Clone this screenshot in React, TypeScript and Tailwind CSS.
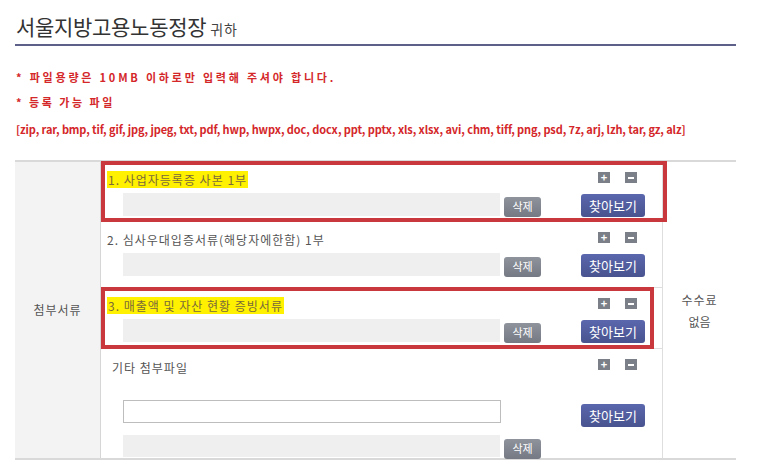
import React from 'react';

const kr = { fontFamily: '"Noto Sans CJK KR", "Noto Sans", sans-serif' };

const PlusMinus = () => (
  <div className="flex gap-[15px]">
    <span className="w-[12px] h-[11px] bg-[#7b7f88] flex items-center justify-center text-white text-[11px] leading-none font-bold">+</span>
    <span className="w-[12px] h-[11px] bg-[#7b7f88] flex items-center justify-center">
      <span className="w-[6px] h-[2px] bg-white" />
    </span>
  </div>
);

const DelButton = () => (
  <button className="w-[37px] h-[20px] rounded-[3px] bg-gradient-to-b from-[#8e939c] to-[#747983] text-white text-[11px] leading-none" style={kr}>
    삭제
  </button>
);

const BrowseButton = () => (
  <button className="w-[64px] h-[23px] rounded-[3px] bg-gradient-to-b from-[#5b67ad] to-[#48538f] text-white text-[13px] leading-none" style={kr}>
    찾아보기
  </button>
);

interface DocRowProps {
  label: string;
  highlight?: boolean;
  boxed?: 'wide' | 'narrow';
  h: string;
}

const DocRow: React.FC<DocRowProps> = ({ label, highlight, boxed, h }) => (
  <div className={`relative border-b border-[#dedede] ${h}`}>
    {boxed && (
      <div
        className={`absolute left-0 top-[-1px] bottom-[-1px] border-[4px] border-[#c9383c] ${
          boxed === 'wide' ? 'right-[-5px]' : 'right-[8px]'
        }`}
      />
    )}
    <div className="flex items-start justify-between pl-[6px] pr-[25px] pt-[9px]">
      <span
        className={`text-[12px] leading-[17px] tracking-[1px] ${highlight ? 'bg-[#fff100] text-[#7a6a3a] px-[1px]' : 'text-[#555]'}`}
        style={kr}
      >
        {label}
      </span>
      <div className="pt-[1px]">
        <PlusMinus />
      </div>
    </div>
    <div className="flex items-center pl-[22px] mt-[4px]">
      <div className="w-[377px] h-[23px] bg-[#efefef]" />
      <div className="ml-[4px]">
        <DelButton />
      </div>
      <div className="ml-[40px]">
        <BrowseButton />
      </div>
    </div>
  </div>
);

export default function App() {
  return (
    <div className="w-[767px] h-[471px] bg-white overflow-hidden" style={kr}>
      <div className="pl-[15px] pt-[14px] w-[736px]">
        <div className="flex items-end border-b-[2px] border-[#5d6088] pb-[6px] pl-[1px]">
          <span className="text-[21px] leading-[24px] text-[#333] tracking-[-0.3px]">서울지방고용노동정장</span>
          <span className="text-[14px] leading-[18px] text-[#444] ml-[4px] tracking-[1px]">귀하</span>
        </div>

        <div className="mt-[24px] pl-[1px] text-[#d4272a] text-[11px] font-bold">
          <p className="leading-[14px] tracking-[2.8px]">* 파일용량은 10MB 이하로만 입력해 주셔야 합니다.</p>
          <p className="leading-[14px] mt-[11px] tracking-[2.5px]">* 등록 가능 파일</p>
          <p className="leading-[14px] mt-[13px] tracking-[-0.1px]">
            [zip, rar, bmp, tif, gif, jpg, jpeg, txt, pdf, hwp, hwpx, doc, docx, ppt, pptx, xls, xlsx, avi, chm, tiff, png, psd, 7z, arj, lzh, tar, gz, alz]
          </p>
        </div>

        <div className="mt-[24px] flex border-t-[2px] border-b-[2px] border-[#d9d9d9]">
          <div className="w-[86px] bg-[#f3f3f3] border-r border-[#d6d6d6] flex items-center justify-center">
            <span className="text-[12px] text-[#555] tracking-[1px]">첨부서류</span>
          </div>

          <div className="w-[562px] border-r border-[#dedede]">
            <DocRow label="1. 사업자등록증 사본 1부" highlight boxed="wide" h="h-[60px]" />
            <DocRow label="2. 심사우대입증서류(해당자에한함) 1부" h="h-[66px]" />
            <DocRow label="3. 매출액 및 자산 현황 증빙서류" highlight boxed="narrow" h="h-[61px]" />
            <div className="h-[109px] relative">
              <div className="flex items-start justify-between pl-[11px] pr-[25px] pt-[10px]">
                <span className="text-[12px] leading-[17px] tracking-[1px] text-[#555]">기타 첨부파일</span>
                <PlusMinus />
              </div>
              <div className="flex items-start pl-[22px] mt-[24px]">
                <div className="w-[378px] h-[23px] bg-white border border-[#bdbdbd]" />
                <div className="ml-[80px] mt-[2px]">
                  <BrowseButton />
                </div>
              </div>
              <div className="flex items-center pl-[22px] mt-[7px]">
                <div className="w-[377px] h-[22px] bg-[#efefef]" />
                <div className="ml-[4px]">
                  <DelButton />
                </div>
              </div>
            </div>
          </div>

          <div className="flex-1 flex flex-col items-center justify-center gap-[5px] text-[12px] text-[#555] leading-[17px]">
            <span className="tracking-[1px]">수수료</span>
            <span>없음</span>
          </div>
        </div>
      </div>
    </div>
  );
}
